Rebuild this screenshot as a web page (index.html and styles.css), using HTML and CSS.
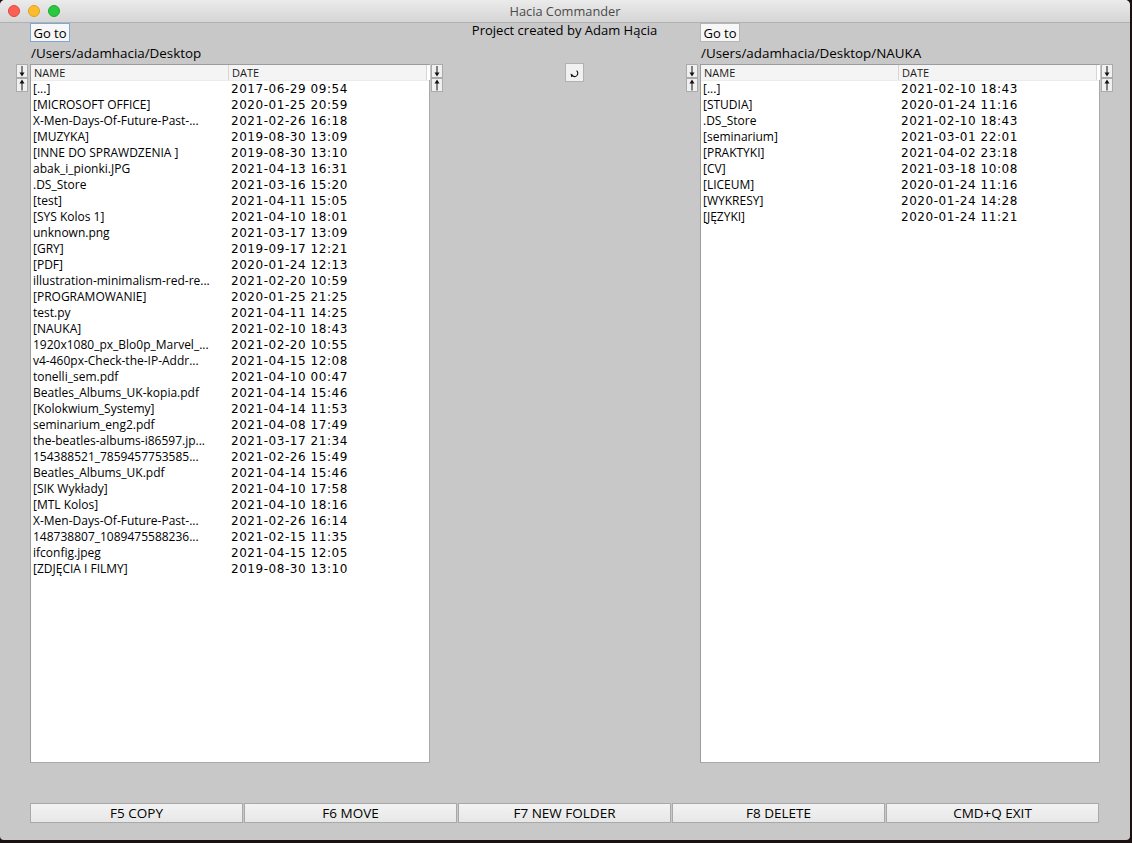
FILE: index.html
```html
<!DOCTYPE html>
<html>
<head>
<meta charset="utf-8">
<title>Hacia Commander</title>
<link rel="stylesheet" href="styles.css">
</head>
<body>
<div class="window">
  <div class="titlebar">
    <div class="lights">
      <span class="light red"></span><span class="light yellow"></span><span class="light green"></span>
    </div>
    <div class="title">Hacia Commander</div>
  </div>
  <div class="content">
    <div class="main">
      <div class="sorter">
        <button class="sort"><svg viewBox="0 0 10 12" width="10" height="12"><line x1="5" y1="1" x2="5" y2="9" stroke="#111" stroke-width="1"/><polygon points="2.5,7.5 7.5,7.5 5,11.5" fill="#111"/></svg></button>
        <button class="sort"><svg viewBox="0 0 10 12" width="10" height="12"><line x1="5" y1="3" x2="5" y2="11.5" stroke="#111" stroke-width="1"/><polygon points="2.5,4.5 7.5,4.5 5,0.5" fill="#111"/></svg></button>
      </div>
      <div class="panel">
        <button class="goto focused">Go to</button>
        <div class="path">/Users/adamhacia/Desktop</div>
        <div class="table">
          <div class="thead"><div class="th">NAME</div><div class="th">DATE</div><div class="th"></div></div>
          <div class="tbody">
            <div class="tr"><div class="td name">[...]</div><div class="td date">2017-06-29 09:54</div></div>
            <div class="tr"><div class="td name">[MICROSOFT OFFICE]</div><div class="td date">2020-01-25 20:59</div></div>
            <div class="tr"><div class="td name">X-Men-Days-Of-Future-Past-...</div><div class="td date">2021-02-26 16:18</div></div>
            <div class="tr"><div class="td name">[MUZYKA]</div><div class="td date">2019-08-30 13:09</div></div>
            <div class="tr"><div class="td name">[INNE DO SPRAWDZENIA ]</div><div class="td date">2019-08-30 13:10</div></div>
            <div class="tr"><div class="td name">abak_i_pionki.JPG</div><div class="td date">2021-04-13 16:31</div></div>
            <div class="tr"><div class="td name">.DS_Store</div><div class="td date">2021-03-16 15:20</div></div>
            <div class="tr"><div class="td name">[test]</div><div class="td date">2021-04-11 15:05</div></div>
            <div class="tr"><div class="td name">[SYS Kolos 1]</div><div class="td date">2021-04-10 18:01</div></div>
            <div class="tr"><div class="td name">unknown.png</div><div class="td date">2021-03-17 13:09</div></div>
            <div class="tr"><div class="td name">[GRY]</div><div class="td date">2019-09-17 12:21</div></div>
            <div class="tr"><div class="td name">[PDF]</div><div class="td date">2020-01-24 12:13</div></div>
            <div class="tr"><div class="td name">illustration-minimalism-red-re...</div><div class="td date">2021-02-20 10:59</div></div>
            <div class="tr"><div class="td name">[PROGRAMOWANIE]</div><div class="td date">2020-01-25 21:25</div></div>
            <div class="tr"><div class="td name">test.py</div><div class="td date">2021-04-11 14:25</div></div>
            <div class="tr"><div class="td name">[NAUKA]</div><div class="td date">2021-02-10 18:43</div></div>
            <div class="tr"><div class="td name">1920x1080_px_Blo0p_Marvel_...</div><div class="td date">2021-02-20 10:55</div></div>
            <div class="tr"><div class="td name">v4-460px-Check-the-IP-Addr...</div><div class="td date">2021-04-15 12:08</div></div>
            <div class="tr"><div class="td name">tonelli_sem.pdf</div><div class="td date">2021-04-10 00:47</div></div>
            <div class="tr"><div class="td name">Beatles_Albums_UK-kopia.pdf</div><div class="td date">2021-04-14 15:46</div></div>
            <div class="tr"><div class="td name">[Kolokwium_Systemy]</div><div class="td date">2021-04-14 11:53</div></div>
            <div class="tr"><div class="td name">seminarium_eng2.pdf</div><div class="td date">2021-04-08 17:49</div></div>
            <div class="tr"><div class="td name">the-beatles-albums-i86597.jp...</div><div class="td date">2021-03-17 21:34</div></div>
            <div class="tr"><div class="td name">154388521_7859457753585...</div><div class="td date">2021-02-26 15:49</div></div>
            <div class="tr"><div class="td name">Beatles_Albums_UK.pdf</div><div class="td date">2021-04-14 15:46</div></div>
            <div class="tr"><div class="td name">[SIK Wykłady]</div><div class="td date">2021-04-10 17:58</div></div>
            <div class="tr"><div class="td name">[MTL Kolos]</div><div class="td date">2021-04-10 18:16</div></div>
            <div class="tr"><div class="td name">X-Men-Days-Of-Future-Past-...</div><div class="td date">2021-02-26 16:14</div></div>
            <div class="tr"><div class="td name">148738807_1089475588236...</div><div class="td date">2021-02-15 11:35</div></div>
            <div class="tr"><div class="td name">ifconfig.jpeg</div><div class="td date">2021-04-15 12:05</div></div>
            <div class="tr"><div class="td name">[ZDJĘCIA I FILMY]</div><div class="td date">2019-08-30 13:10</div></div>
          </div>
        </div>
      </div>
      <div class="sorter after">
        <button class="sort"><svg viewBox="0 0 10 12" width="10" height="12"><line x1="5" y1="1" x2="5" y2="9" stroke="#111" stroke-width="1"/><polygon points="2.5,7.5 7.5,7.5 5,11.5" fill="#111"/></svg></button>
        <button class="sort"><svg viewBox="0 0 10 12" width="10" height="12"><line x1="5" y1="3" x2="5" y2="11.5" stroke="#111" stroke-width="1"/><polygon points="2.5,4.5 7.5,4.5 5,0.5" fill="#111"/></svg></button>
      </div>
      <div class="center">
        <div class="credit">Project created by Adam Hącia</div>
        <button class="refresh"><svg viewBox="0 0 14 14" width="14" height="14"><path d="M8.6 4.6 A3.4 3.4 0 1 1 4 9.6" fill="none" stroke="#111" stroke-width="1.1"/><polygon points="2.6,7.6 5.6,9.2 3.2,11.2" fill="#111"/></svg></button>
      </div>
      <div class="sorter">
        <button class="sort"><svg viewBox="0 0 10 12" width="10" height="12"><line x1="5" y1="1" x2="5" y2="9" stroke="#111" stroke-width="1"/><polygon points="2.5,7.5 7.5,7.5 5,11.5" fill="#111"/></svg></button>
        <button class="sort"><svg viewBox="0 0 10 12" width="10" height="12"><line x1="5" y1="3" x2="5" y2="11.5" stroke="#111" stroke-width="1"/><polygon points="2.5,4.5 7.5,4.5 5,0.5" fill="#111"/></svg></button>
      </div>
      <div class="panel">
        <button class="goto">Go to</button>
        <div class="path">/Users/adamhacia/Desktop/NAUKA</div>
        <div class="table">
          <div class="thead"><div class="th">NAME</div><div class="th">DATE</div><div class="th"></div></div>
          <div class="tbody">
            <div class="tr"><div class="td name">[...]</div><div class="td date">2021-02-10 18:43</div></div>
            <div class="tr"><div class="td name">[STUDIA]</div><div class="td date">2020-01-24 11:16</div></div>
            <div class="tr"><div class="td name">.DS_Store</div><div class="td date">2021-02-10 18:43</div></div>
            <div class="tr"><div class="td name">[seminarium]</div><div class="td date">2021-03-01 22:01</div></div>
            <div class="tr"><div class="td name">[PRAKTYKI]</div><div class="td date">2021-04-02 23:18</div></div>
            <div class="tr"><div class="td name">[CV]</div><div class="td date">2021-03-18 10:08</div></div>
            <div class="tr"><div class="td name">[LICEUM]</div><div class="td date">2020-01-24 11:16</div></div>
            <div class="tr"><div class="td name">[WYKRESY]</div><div class="td date">2020-01-24 14:28</div></div>
            <div class="tr"><div class="td name">[JĘZYKI]</div><div class="td date">2020-01-24 11:21</div></div>
          </div>
        </div>
      </div>
      <div class="sorter after">
        <button class="sort"><svg viewBox="0 0 10 12" width="10" height="12"><line x1="5" y1="1" x2="5" y2="9" stroke="#111" stroke-width="1"/><polygon points="2.5,7.5 7.5,7.5 5,11.5" fill="#111"/></svg></button>
        <button class="sort"><svg viewBox="0 0 10 12" width="10" height="12"><line x1="5" y1="3" x2="5" y2="11.5" stroke="#111" stroke-width="1"/><polygon points="2.5,4.5 7.5,4.5 5,0.5" fill="#111"/></svg></button>
      </div>
    </div>
    <div class="footer">
      <button class="fbtn">F5 COPY</button>
      <button class="fbtn">F6 MOVE</button>
      <button class="fbtn">F7 NEW FOLDER</button>
      <button class="fbtn">F8 DELETE</button>
      <button class="fbtn">CMD+Q EXIT</button>
    </div>
  </div>
</div>
</body>
</html>
```
FILE: styles.css
```css
* { box-sizing: border-box; }
html, body {
  margin: 0;
  padding: 0;
  width: 1132px;
  height: 843px;
  overflow: hidden;
  background: #1b1012;
  font-family: "Open Sans", "DejaVu Sans", sans-serif;
  color: #000;
}
button {
  font-family: inherit;
  color: #000;
  padding: 0;
  margin: 0;
  cursor: default;
}
.window {
  width: 1130px;
  height: 840px;
  background: #c8c8c8;
  border-radius: 5px 5px 4px 4px;
  overflow: hidden;
  display: flex;
  flex-direction: column;
}
.titlebar {
  height: 23px;
  flex: none;
  background: linear-gradient(#ebebeb, #d5d5d5);
  border-bottom: 1px solid #b1b1b1;
  display: flex;
  align-items: center;
  position: relative;
}
.lights {
  display: flex;
  gap: 8px;
  padding-left: 8px;
}
.light {
  width: 12px;
  height: 12px;
  border-radius: 50%;
  display: block;
}
.red { background: #fc5f57; border: 1px solid #de4840; }
.yellow { background: #fdbc2e; border: 1px solid #dea024; }
.green { background: #28c840; border: 1px solid #1eaa2f; }
.title {
  position: absolute;
  left: 0;
  right: 0;
  text-align: center;
  font-size: 12.8px;
  color: #4a4a4a;
  top: 2px;
}
.content {
  flex: 1;
  display: flex;
  flex-direction: column;
  padding-left: 16px;
}
.main {
  display: flex;
  align-items: flex-start;
}
.sorter {
  width: 12px;
  margin-top: 41px;
  margin-right: 2px;
  display: flex;
  flex-direction: column;
  gap: 0;
}
.sorter.after {
  margin-right: 0;
  margin-left: 1px;
}
.sort {
  width: 12px;
  height: 14px;
  background: #f0f0f0;
  border: 1px solid #ababab;
  display: flex;
  align-items: center;
  justify-content: center;
}
.sort svg { display: block; }
.panel {
  width: 400px;
  display: flex;
  flex-direction: column;
  align-items: flex-start;
}
.goto {
  margin-top: 0;
  height: 19px;
  width: 40px;
  background: #f7f7f7;
  border: 1px solid #b5b5b5;
  font-size: 13px;
  line-height: 16px;
}
.goto.focused {
  border-color: #7ea6d8;
}
.path {
  height: 22px;
  font-size: 13.4px;
  line-height: 22px;
  padding-left: 1px;
  white-space: nowrap;
}
.table {
  width: 400px;
  height: 699px;
  background: #fff;
  border: 1px solid #9c9c9c;
  border-right-color: #a8a8a8;
  border-bottom-color: #a8a8a8;
}
.thead {
  display: grid;
  grid-template-columns: 198px 198px 1fr;
  height: 16px;
  background: #f4f4f4;
  border-bottom: 1px solid #ececec;
}
.th {
  font-size: 11px;
  line-height: 15px;
  padding-left: 3px;
  color: #1a1a1a;
  border-right: 1px solid #d6d6d6;
}
.th:last-child { border-right: none; background: #fff; }
.tbody {
  display: flex;
  flex-direction: column;
}
.tr {
  display: grid;
  grid-template-columns: 198px 198px;
  height: 16px;
  align-items: center;
}
.td {
  white-space: nowrap;
  overflow: hidden;
  text-overflow: clip;
  line-height: 16px;
}
.name {
  font-size: 12px;
  padding-left: 2px;
}
.date {
  font-family: "DejaVu Sans", sans-serif;
  font-size: 12px;
  letter-spacing: 0.55px;
  padding-left: 2px;
}
.center {
  width: 243px;
  display: flex;
  flex-direction: column;
  align-items: center;
}
.credit {
  font-size: 13px;
  line-height: 15px;
  margin-top: 0;
  white-space: nowrap;
}
.refresh {
  margin-top: 25px;
  margin-left: 20px;
  width: 19px;
  height: 19px;
  background: #f1f1f1;
  border: 1px solid #b1b1b1;
  display: flex;
  align-items: center;
  justify-content: center;
}
.refresh svg { display: block; }
.footer {
  margin-top: 40px;
  margin-left: 14px;
  display: flex;
  gap: 1px;
}
.fbtn {
  width: 213px;
  height: 20px;
  background: linear-gradient(#f3f3f3, #e7e7e7);
  border: 1px solid #a9a9a9;
  font-size: 13.5px;
  line-height: 17px;
}
```
